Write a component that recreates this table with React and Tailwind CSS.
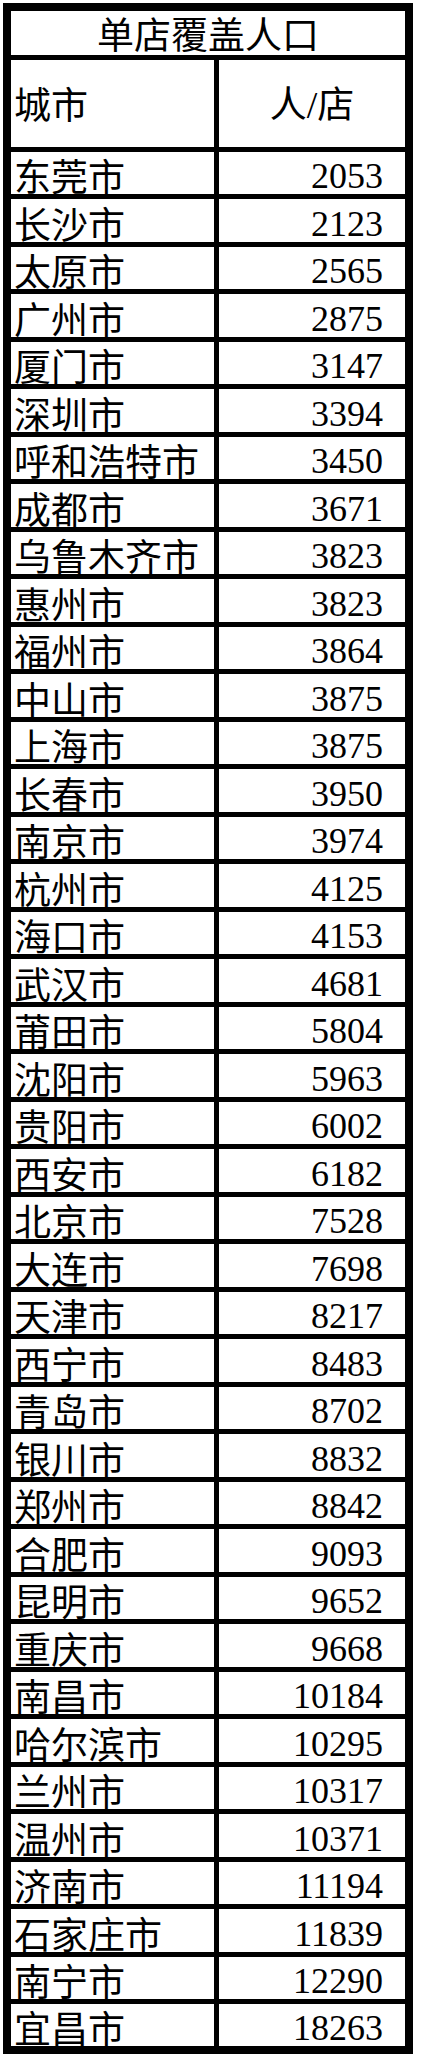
import React from "react";

const rows = [
  ["东莞市", 2053],
  ["长沙市", 2123],
  ["太原市", 2565],
  ["广州市", 2875],
  ["厦门市", 3147],
  ["深圳市", 3394],
  ["呼和浩特市", 3450],
  ["成都市", 3671],
  ["乌鲁木齐市", 3823],
  ["惠州市", 3823],
  ["福州市", 3864],
  ["中山市", 3875],
  ["上海市", 3875],
  ["长春市", 3950],
  ["南京市", 3974],
  ["杭州市", 4125],
  ["海口市", 4153],
  ["武汉市", 4681],
  ["莆田市", 5804],
  ["沈阳市", 5963],
  ["贵阳市", 6002],
  ["西安市", 6182],
  ["北京市", 7528],
  ["大连市", 7698],
  ["天津市", 8217],
  ["西宁市", 8483],
  ["青岛市", 8702],
  ["银川市", 8832],
  ["郑州市", 8842],
  ["合肥市", 9093],
  ["昆明市", 9652],
  ["重庆市", 9668],
  ["南昌市", 10184],
  ["哈尔滨市", 10295],
  ["兰州市", 10317],
  ["温州市", 10371],
  ["济南市", 11194],
  ["石家庄市", 11839],
  ["南宁市", 12290],
  ["宜昌市", 18263],
];

const cjk = "font-['Noto_Sans_CJK_SC',sans-serif]";

export default function App() {
  return (
    <div className="bg-white w-[422px] min-h-[2064px] pt-[3px] pl-[3px]">
      <div className="w-[410px] border-[8px] border-black bg-white text-black">
        <div className="h-[49px] border-b-[5px] border-black flex items-center justify-center">
          <span className={`${cjk} block text-[37px] leading-none`}>单店覆盖人口</span>
        </div>
        <div className="h-[92px] border-b-[5px] border-black grid grid-cols-[208px_186px]">
          <div className="border-r-[5px] border-black flex items-center pl-[3px]">
            <span className={`${cjk} block text-[37px] leading-none`}>城市</span>
          </div>
          <div className="flex items-center justify-center">
            <span className={`${cjk} block text-[37px] leading-none`}>
              人<span className="font-['Liberation_Serif',serif] text-[38px]">/</span>店
            </span>
          </div>
        </div>
        {rows.map(([city, n], i) => {
          const last = i === rows.length - 1;
          const cls = last
            ? "h-[42px] grid grid-cols-[208px_186px]"
            : i % 2 === 0
            ? "h-[47px] border-b-[5px] border-black grid grid-cols-[208px_186px]"
            : "h-[48px] border-b-[5px] border-black grid grid-cols-[208px_186px]";
          return (
            <div key={city} className={cls}>
              <div className="border-r-[5px] border-black flex items-end pl-[3px]">
                <span className={`${cjk} block text-[37px] leading-none whitespace-nowrap`}>{city}</span>
              </div>
              <div className="flex items-end justify-end pr-[22px]">
                <span className="font-['Liberation_Serif',serif] block text-[36px] leading-none">{n}</span>
              </div>
            </div>
          );
        })}
      </div>
    </div>
  );
}
